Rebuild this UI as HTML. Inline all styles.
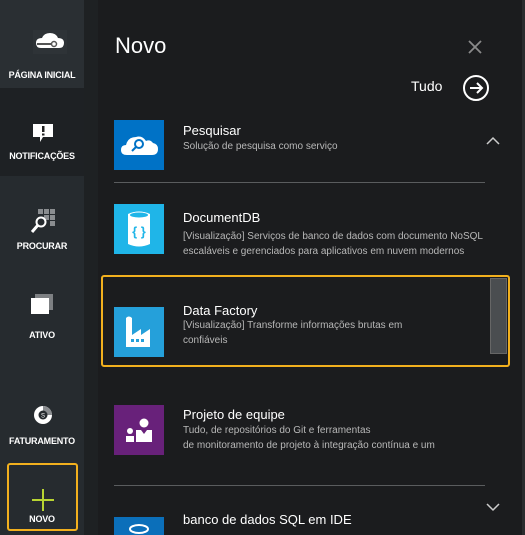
<!DOCTYPE html>
<html><head><meta charset="utf-8"><style>
*{margin:0;padding:0;box-sizing:border-box}
html,body{width:525px;height:535px;overflow:hidden}
body{background:#1b1c1e;font-family:"Liberation Sans",sans-serif;position:relative;color:#fff}
.a{position:absolute}
.side{left:0;top:0;width:84px;height:535px;background:#262b2f}
.strip{left:84px;top:0;width:14px;height:535px;background:#1e2123}
.lbl{position:absolute;left:0;width:84px;text-align:center;font-size:9px;font-weight:bold;color:#fff;letter-spacing:-0.2px}
.ic{position:absolute;width:50px;height:50px;left:114px}
.t{position:absolute;left:183px;font-size:13px;color:#fff}
.d{position:absolute;left:183px;font-size:10px;color:#b8b8b8;line-height:15px}
.sep{position:absolute;left:114px;width:371px;height:1px;background:#5a5c5e}
</style></head><body>
<div class="a side"></div>
<div class="a" style="left:0;top:0;width:84px;height:88px;background:#2a2f33"></div>
<div class="a" style="left:0;top:88px;width:84px;height:88px;background:#1e2124"></div>
<div class="a strip"></div>
<div class="a" style="left:522px;top:0;width:3px;height:535px;background:#2a2c2e"></div>

<svg class="a" style="left:33px;top:30px" width="34" height="24" viewBox="0 0 34 24"><rect width="34" height="24" fill="#2e3337"/><path d="M8 18 Q3 18 3 13 Q3 8 9 8 Q11 3 17 3 Q23 3 25 8 Q31 8 31 13 Q31 18 26 18 Z" fill="#fff"/><path d="M4 14 H20" stroke="#555" stroke-width="2"/><circle cx="21" cy="14" r="2.5" fill="#fff" stroke="#555" stroke-width="1.5"/></svg>
<div class="lbl" style="top:70px">PÁGINA INICIAL</div>

<svg class="a" style="left:32px;top:123px" width="22" height="22"><path d="M1 1H21V14H11L8 19V14H1Z" fill="#fff"/><rect x="10" y="3" width="2.5" height="6" fill="#222"/><rect x="10" y="10.5" width="2.5" height="2" fill="#222"/></svg>
<div class="lbl" style="top:151px">NOTIFICAÇÕES</div>

<svg class="a" style="left:30px;top:208px" width="26" height="26"><g fill="#8a8d90"><rect x="8" y="1" width="5" height="5"/><rect x="14" y="1" width="5" height="5"/><rect x="20" y="1" width="5" height="5"/><rect x="14" y="7" width="5" height="5"/><rect x="20" y="7" width="5" height="5"/><rect x="20" y="13" width="5" height="5"/></g><circle cx="11" cy="14" r="4.5" fill="none" stroke="#fff" stroke-width="2"/><path d="M8 17 L2 24" stroke="#fff" stroke-width="3"/></svg>
<div class="lbl" style="top:241px">PROCURAR</div>

<svg class="a" style="left:30px;top:293px" width="24" height="22"><rect x="5" y="1" width="18" height="16" fill="#7d8083"/><rect x="1" y="5" width="18" height="16" fill="#fff"/></svg>
<div class="lbl" style="top:330px">ATIVO</div>

<svg class="a" style="left:33px;top:405px" width="20" height="20"><circle cx="10" cy="10" r="9" fill="#fff"/><path d="M10 1 A9 9 0 0 1 19 10 L14 10 A4 4 0 0 0 10 6Z" fill="#8a8d90"/><circle cx="10" cy="10" r="4.5" fill="#262b2f"/><text x="10" y="12.5" font-size="6" fill="#fff" text-anchor="middle" font-family="Liberation Sans">S</text></svg>
<div class="lbl" style="top:436px">FATURAMENTO</div>

<div class="a" style="left:7px;top:463px;width:71px;height:68px;border:2px solid #f2b01e;border-radius:3px"></div>
<svg class="a" style="left:31px;top:488px" width="24" height="24"><path d="M12 1V23M1 12H23" stroke="#b8d432" stroke-width="2"/></svg>
<div class="lbl" style="top:514px">NOVO</div>

<div class="a" style="left:115px;top:33px;font-size:22px">Novo</div>
<svg class="a" style="left:468px;top:40px" width="14" height="14"><path d="M1 1L13 13M13 1L1 13" stroke="#8a8a8a" stroke-width="1.8"/></svg>
<div class="a" style="left:411px;top:78px;font-size:14px">Tudo</div>
<svg class="a" style="left:462px;top:74px" width="28" height="28"><circle cx="14" cy="14" r="12" fill="none" stroke="#fff" stroke-width="2"/><path d="M8 14H20M15 9L20 14L15 19" fill="none" stroke="#fff" stroke-width="2"/></svg>

<svg class="ic" style="top:120px" viewBox="0 0 50 50"><rect width="50" height="50" fill="#0072c6"/><path d="M13 35 Q7 35 7 30 Q7 25 12 25 Q14 17 22 17 Q28 15 32 21 Q36 19 39 23 Q44 24 44 29 Q44 35 38 35Z" fill="#fff"/><circle cx="25" cy="24" r="4" fill="none" stroke="#0072c6" stroke-width="2"/><path d="M22 27L18 31" stroke="#0072c6" stroke-width="2"/></svg>
<div class="t" style="top:123px">Pesquisar</div>
<div class="d" style="top:139px">Solução de pesquisa como serviço</div>
<svg class="a" style="left:486px;top:136px" width="14" height="9"><path d="M1 8L7 2L13 8" fill="none" stroke="#ccc" stroke-width="1.5"/></svg>
<div class="sep" style="top:182px"></div>

<svg class="ic" style="top:204px" viewBox="0 0 50 50"><rect width="50" height="50" fill="#1fb5e8"/><path d="M14 10 Q25 5 36 10 V40 Q25 45 14 40Z" fill="#fff"/><ellipse cx="25" cy="11" rx="9" ry="2.5" fill="#1fb5e8"/><text x="25" y="32" font-size="13" fill="#1fb5e8" text-anchor="middle" font-family="Liberation Sans" font-weight="bold">{ }</text></svg>
<div class="t" style="top:210px">DocumentDB</div>
<div class="d" style="top:229px">[Visualização] Serviços de banco de dados com documento NoSQL<br>escaláveis e gerenciados para aplicativos em nuvem modernos</div>

<div class="a" style="left:101px;top:275px;width:409px;height:92px;border:2px solid #f2b01e;border-radius:3px"></div>
<div class="a" style="left:490px;top:278px;width:17px;height:76px;background:#4a4d50;border:1px solid #666"></div>
<svg class="ic" style="top:307px" viewBox="0 0 50 50"><rect width="50" height="50" fill="#25a0da"/><path d="M12 11 Q15 8 18 11 V28 L27 22 V28 L36 22 V40 H12Z" fill="#fff"/><g fill="#25a0da"><rect x="17" y="32" width="3" height="3"/><rect x="22" y="32" width="3" height="3"/><rect x="27" y="32" width="3" height="3"/></g></svg>
<div class="t" style="top:303px">Data Factory</div>
<div class="d" style="top:318px">[Visualização] Transforme informações brutas em<br>confiáveis</div>

<svg class="ic" style="top:405px" viewBox="0 0 50 50"><rect width="50" height="50" fill="#68217a"/><circle cx="30" cy="18" r="4.5" fill="#fff"/><path d="M22 25H38V37H22Z" fill="#fff"/><path d="M27 25L30 29L33 25" fill="#68217a"/><circle cx="16" cy="26" r="3" fill="#fff"/><rect x="12" y="31" width="8" height="6" fill="#fff"/></svg>
<div class="t" style="top:407px">Projeto de equipe</div>
<div class="d" style="top:423px">Tudo, de repositórios do Git e ferramentas<br>de monitoramento de projeto à integração contínua e um</div>
<div class="sep" style="top:485px"></div>
<svg class="a" style="left:486px;top:503px" width="14" height="9"><path d="M1 1L7 7L13 1" fill="none" stroke="#ccc" stroke-width="1.5"/></svg>

<svg class="a" style="left:114px;top:517px" width="50" height="18" viewBox="0 0 50 18"><rect width="50" height="18" fill="#0b6fba"/><ellipse cx="25" cy="12" rx="9" ry="4" fill="none" stroke="#fff" stroke-width="2"/></svg>
<div class="t" style="top:512px">banco de dados SQL em IDE</div>
</body></html>
